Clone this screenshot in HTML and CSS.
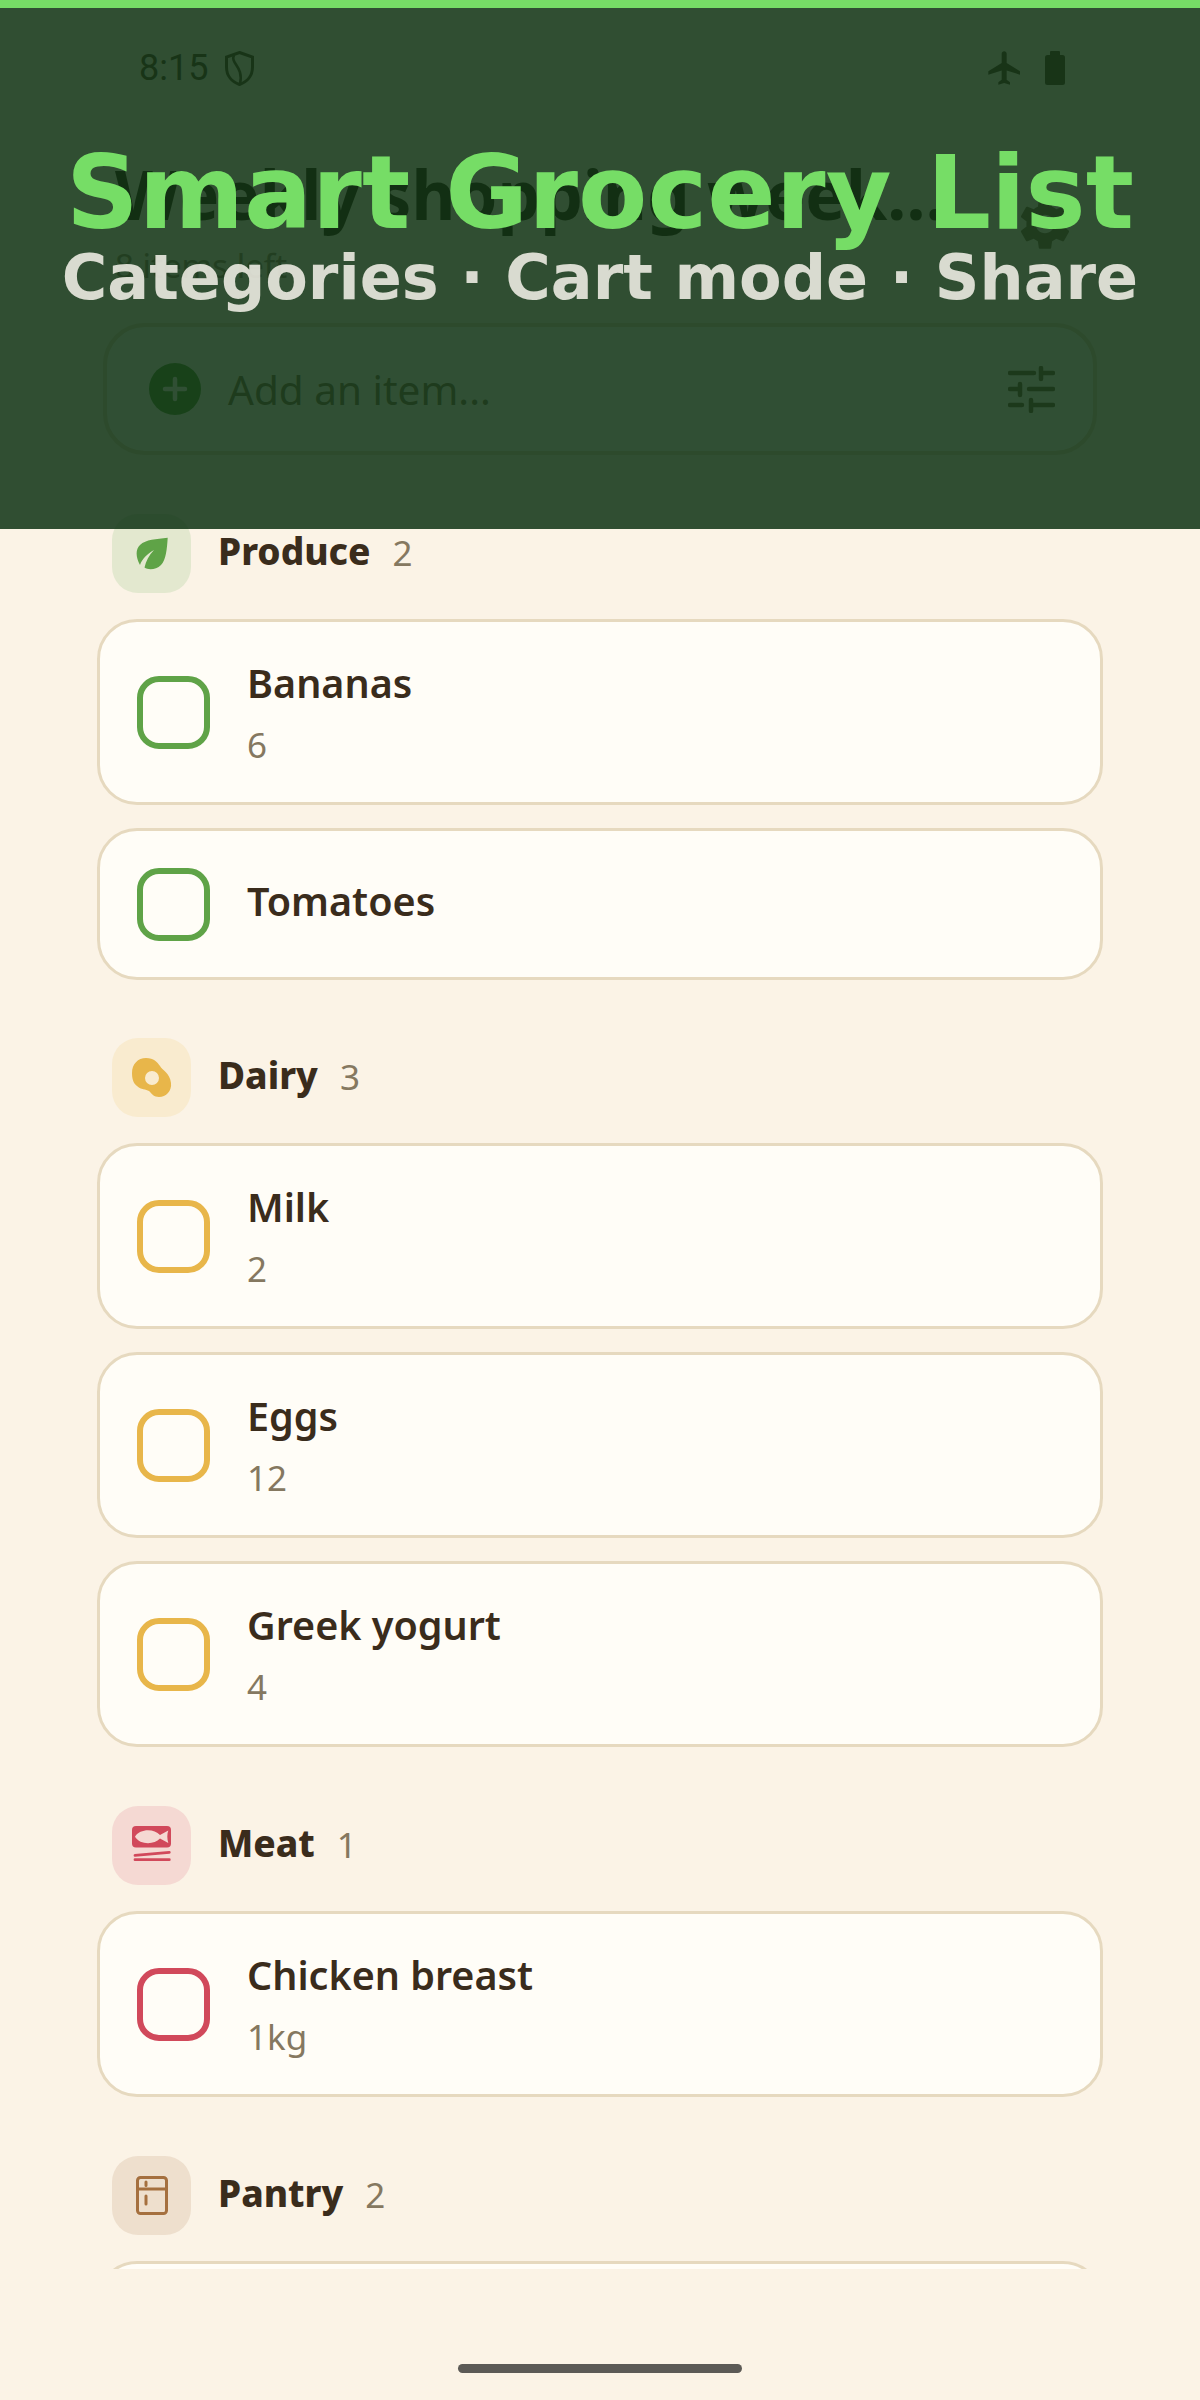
FILE: index.html
```html
<!DOCTYPE html>
<html lang="en">

<head>
    <meta charset="UTF-8">
    <meta name="viewport" content="width=device-width, initial-scale=1.0">
    <title>Smart Grocery List</title>
    <link rel="stylesheet" href="styles.css">
</head>

<body>
    <div class="screen">

        <div class="status-bar">
            <div class="status-left">
                <span class="status-time">8:15</span>
                <svg class="icon-shield" viewBox="0 0 29 35" fill="none" stroke="currentColor" stroke-width="3">
                    <path d="M14.5 1.5L27.5 6V16C27.5 25 22 31 14.5 33.5C7 31 1.5 25 1.5 16V6Z" />
                    <path d="M9 4C5 13 19 15 15 33" stroke-width="2.6" />
                </svg>
            </div>
            <div class="status-right">
                <svg class="icon-plane" viewBox="0 0 24 24" fill="currentColor">
                    <path d="M21 16v-2l-8-5V3.5c0-.83-.67-1.5-1.5-1.5S10 2.67 10 3.5V9l-8 5v2l8-2.5V19l-2 1.5V22l3.5-1 3.5 1v-1.5L13 19v-5.5l8 2.5z" />
                </svg>
                <svg class="icon-battery" viewBox="0 0 20 34" fill="currentColor">
                    <rect x="5" y="0" width="10" height="6" rx="1" />
                    <rect x="0" y="4" width="20" height="30" rx="2.5" />
                </svg>
            </div>
        </div>

        <header class="top-row">
            <div class="top-text">
                <h1 class="list-title">Weekly shopping weekly list</h1>
                <p class="list-sub">8 items left</p>
            </div>
            <svg class="icon-gear" viewBox="0 0 24 24" fill="currentColor">
                <path d="M19.14 12.94c.04-.3.06-.61.06-.94 0-.32-.02-.64-.07-.94l2.03-1.58c.18-.14.23-.41.12-.61l-1.92-3.32c-.12-.22-.37-.29-.59-.22l-2.39.96c-.5-.38-1.03-.7-1.62-.94l-.36-2.54c-.04-.24-.24-.41-.48-.41h-3.84c-.24 0-.43.17-.47.41l-.36 2.54c-.59.24-1.13.57-1.62.94l-2.39-.96c-.22-.08-.47 0-.59.22L2.74 8.87c-.12.21-.08.47.12.61l2.03 1.58c-.05.3-.09.63-.09.94s.02.64.07.94l-2.03 1.58c-.18.14-.23.41-.12.61l1.92 3.32c.12.22.37.29.59.22l2.39-.96c.5.38 1.03.7 1.62.94l.36 2.54c.05.24.24.41.48.41h3.84c.24 0 .44-.17.47-.41l.36-2.54c.59-.24 1.13-.56 1.62-.94l2.39.96c.22.08.47 0 .59-.22l1.92-3.32c.12-.22.07-.47-.12-.61l-2.01-1.58zM12 15.6c-1.98 0-3.6-1.62-3.6-3.6s1.62-3.6 3.6-3.6 3.6 1.62 3.6 3.6-1.62 3.6-3.6 3.6z" />
            </svg>
        </header>

        <div class="add-box">
            <span class="add-btn">
                <svg viewBox="0 0 52 52" fill="none" stroke="currentColor" stroke-width="4.5" stroke-linecap="round">
                    <path d="M26 16V36M16 26H36" />
                </svg>
            </span>
            <span class="add-hint">Add an item...</span>
            <svg class="icon-tune" viewBox="0 0 47 47" fill="none" stroke="currentColor" stroke-width="4.5" stroke-linecap="round">
                <path d="M2 7H26M33 2V13M33 7H45M2 23H12M12 18V29M21 23H45M2 39H14M23 34V45M23 39H45" />
            </svg>
        </div>

        <main class="list">

            <section class="group">
                <div class="group-head">
                    <span class="tile tile-produce">
                        <svg class="tile-icon" viewBox="0 0 32 33" fill="currentColor">
                            <path d="M31.7 .7C20 2.5 10 2 4 8C-.5 12-.5 20 4 28C6 22 11 17 18 13C13 18 10 24 8.5 30.5C12 33 20 33 25 28C30 23 31 12 31.7 .7Z" />
                        </svg>
                    </span>
                    <span class="group-name">Produce</span>
                    <span class="group-count">2</span>
                </div>
                <div class="item">
                    <span class="check check-produce"></span>
                    <div>
                        <div class="item-name">Bananas</div>
                        <div class="item-qty">6</div>
                    </div>
                </div>
                <div class="item">
                    <span class="check check-produce"></span>
                    <div>
                        <div class="item-name">Tomatoes</div>
                    </div>
                </div>
            </section>

            <section class="group">
                <div class="group-head">
                    <span class="tile tile-dairy">
                        <svg class="tile-icon tile-icon-wide" viewBox="0 0 40 40" fill="currentColor" fill-rule="evenodd">
                            <path d="M14 0C22 0 25 4 28 8C30 12 38 15 39 25C40 33 34 39 27 39C22 39 20 36 17 33C14 31 9 32 5 28C1 25 0 20 0 15C0 6 6 0 14 0ZM20 13A7 7 0 1 0 20 27A7 7 0 1 0 20 13Z" />
                        </svg>
                    </span>
                    <span class="group-name">Dairy</span>
                    <span class="group-count">3</span>
                </div>
                <div class="item">
                    <span class="check check-dairy"></span>
                    <div>
                        <div class="item-name">Milk</div>
                        <div class="item-qty">2</div>
                    </div>
                </div>
                <div class="item">
                    <span class="check check-dairy"></span>
                    <div>
                        <div class="item-name">Eggs</div>
                        <div class="item-qty">12</div>
                    </div>
                </div>
                <div class="item">
                    <span class="check check-dairy"></span>
                    <div>
                        <div class="item-name">Greek yogurt</div>
                        <div class="item-qty">4</div>
                    </div>
                </div>
            </section>

            <section class="group">
                <div class="group-head">
                    <span class="tile tile-meat">
                        <svg class="tile-icon tile-icon-wide" viewBox="0 0 40 40">
                            <rect x="0" y="0" width="39" height="21.5" rx="4" fill="currentColor" />
                            <path d="M3 10.7C8 2.5 22 2.5 28 9L36.3 4.5C35 8 35 13 36.3 17L28 12.5C22 19 8 19 3 10.7Z" fill="#f5d9d3" />
                            <path d="M3 29.3L37.3 26.3M3 33.7H37.3" stroke="currentColor" stroke-width="2.8" stroke-linecap="round" fill="none" />
                        </svg>
                    </span>
                    <span class="group-name">Meat</span>
                    <span class="group-count">1</span>
                </div>
                <div class="item">
                    <span class="check check-meat"></span>
                    <div>
                        <div class="item-name">Chicken breast</div>
                        <div class="item-qty">1kg</div>
                    </div>
                </div>
            </section>

            <section class="group">
                <div class="group-head">
                    <span class="tile tile-pantry">
                        <svg class="tile-icon tile-icon-fridge" viewBox="0 0 32 39" fill="none" stroke="currentColor" stroke-width="3" stroke-linecap="round">
                            <rect x="1.5" y="1.5" width="29" height="36" rx="3" />
                            <path d="M1.5 13H30.5M10 6V9.5M10 20V28" />
                        </svg>
                    </span>
                    <span class="group-name">Pantry</span>
                    <span class="group-count">2</span>
                </div>
                <div class="item">
                    <span class="check check-pantry"></span>
                </div>
            </section>

        </main>

        <div class="home-area">
            <span class="home-pill"></span>
        </div>

        <!-- promo banner lies over the top of the app -->
        <div class="promo">
            <h2 class="promo-title">Smart Grocery List</h2>
            <p class="promo-sub">Categories · Cart mode · Share</p>
        </div>

    </div>
</body>

</html>
```

FILE: styles.css
```css
body {
    margin: 0;
    font-family: 'Noto Sans', sans-serif;
    color: #3a2c1c;
    background-color: #fbf3e6;
}

.screen {
    position: relative;
    display: flex;
    flex-direction: column;
    height: 2400px;
    overflow: hidden;
}

/* status bar */
.status-bar {
    display: flex;
    justify-content: space-between;
    align-items: center;
    height: 136px;
    padding: 0 135px 0 139px;
    flex-shrink: 0;
    color: #5c4b3a;
}

.status-left,
.status-right {
    display: flex;
    align-items: center;
}

.status-time {
    font-family: 'Roboto', sans-serif;
    font-size: 36px;
    line-height: 40px;
}

.icon-shield {
    width: 29px;
    height: 35px;
    margin-left: 17px;
}

.icon-plane {
    width: 40px;
    height: 40px;
}

.icon-battery {
    width: 20px;
    height: 34px;
    margin-left: 20px;
}

/* title row */
.top-row {
    display: flex;
    justify-content: space-between;
    padding: 0 124px 0 115px;
    height: 187px;
    flex-shrink: 0;
}

.top-text {
    width: 838px;
}

.list-title {
    margin: 14px 0 0;
    font-size: 67.5px;
    line-height: 88px;
    font-weight: 700;
    white-space: nowrap;
    overflow: hidden;
    text-overflow: ellipsis;
}

.list-sub {
    margin: 6px 0 0;
    font-size: 33px;
    line-height: 44px;
    color: #a09078;
}

.icon-gear {
    width: 62px;
    height: 62px;
    margin-top: 57px;
    color: #8a7a60;
}

/* add item box */
.add-box {
    display: flex;
    align-items: center;
    height: 132px;
    margin: 0 103px;
    padding: 0 38px 0 42px;
    box-sizing: border-box;
    background-color: #fffdf7;
    border: 4px solid #e6d9bf;
    border-radius: 42px;
    flex-shrink: 0;
}

.add-btn {
    display: flex;
    width: 52px;
    height: 52px;
    border-radius: 50%;
    background-color: #5fa347;
    color: #fffdf7;
}

.add-hint {
    flex: 1;
    margin-left: 27px;
    font-size: 40.5px;
    color: #857860;
}

.icon-tune {
    width: 47px;
    height: 47px;
    color: #7a6a50;
}

/* list */
.list {
    flex: 1;
    min-height: 0;
    margin-top: 59px;
    padding: 0 97px;
    overflow: hidden;
}

.group {
    margin-bottom: 59px;
}

.group:first-child {
    margin-bottom: 58px;
}

.group-head {
    display: flex;
    align-items: center;
    margin: 0 0 26px 15px;
}

.tile {
    display: flex;
    align-items: center;
    justify-content: center;
    width: 79px;
    height: 79px;
    border-radius: 26px;
}

.tile-produce {
    background-color: #e3e8cf;
    color: #5fa347;
}

.tile-dairy {
    background-color: #f9ebcf;
    color: #e8b64a;
}

.tile-meat {
    background-color: #f5d9d3;
    color: #d1495b;
}

.tile-pantry {
    background-color: #eedfcd;
    color: #a5703f;
}

.tile-icon {
    width: 32px;
    height: 33px;
}

.tile-icon-wide {
    width: 40px;
    height: 40px;
}

.tile-icon-fridge {
    width: 32px;
    height: 39px;
}

.group-name {
    margin-left: 27px;
    padding-bottom: 6px;
    font-size: 37px;
    line-height: 46px;
    font-weight: 800;
}

.group-count {
    margin-left: 22px;
    padding-bottom: 3px;
    font-size: 35px;
    color: #857860;
}

.item {
    display: flex;
    align-items: center;
    padding: 36.5px;
    margin-bottom: 23px;
    background-color: #fffdf7;
    border: 3px solid #e6d9bf;
    border-radius: 40px;
}

.item:last-child {
    margin-bottom: 0;
}

.check {
    width: 73px;
    height: 73px;
    margin-right: 37.5px;
    box-sizing: border-box;
    border: 6px solid;
    border-radius: 22px;
    flex-shrink: 0;
}

.check-produce {
    border-color: #5fa347;
}

.check-dairy {
    border-color: #e8b64a;
}

.check-meat {
    border-color: #d1495b;
}

.check-pantry {
    border-color: #a5703f;
}

.item-name {
    font-size: 39.5px;
    line-height: 48px;
    padding-bottom: 6px;
    font-weight: 600;
}

.item-qty {
    margin-top: 12px;
    padding-bottom: 1px;
    font-size: 35px;
    line-height: 40px;
    color: #857860;
}

/* bottom gesture area */
.home-area {
    display: flex;
    justify-content: center;
    height: 131px;
    flex-shrink: 0;
    padding-top: 95px;
    box-sizing: border-box;
}

.home-pill {
    width: 284px;
    height: 9px;
    border-radius: 5px;
    background-color: #5c5a56;
}

/* promo banner */
.promo {
    position: absolute;
    top: 0;
    left: 0;
    right: 0;
    height: 529px;
    box-sizing: border-box;
    border-top: 8px solid #76dd66;
    background-color: rgba(12, 48, 18, 0.85);
    text-align: center;
    font-family: 'DejaVu Sans', sans-serif;
    font-weight: 700;
}

.promo-title {
    margin: 136px 0 0;
    font-size: 101px;
    line-height: 98px;
    color: #76dd66;
}

.promo-sub {
    margin: 0;
    font-size: 62px;
    line-height: 72px;
    color: rgba(255, 250, 243, 0.82);
}
```
